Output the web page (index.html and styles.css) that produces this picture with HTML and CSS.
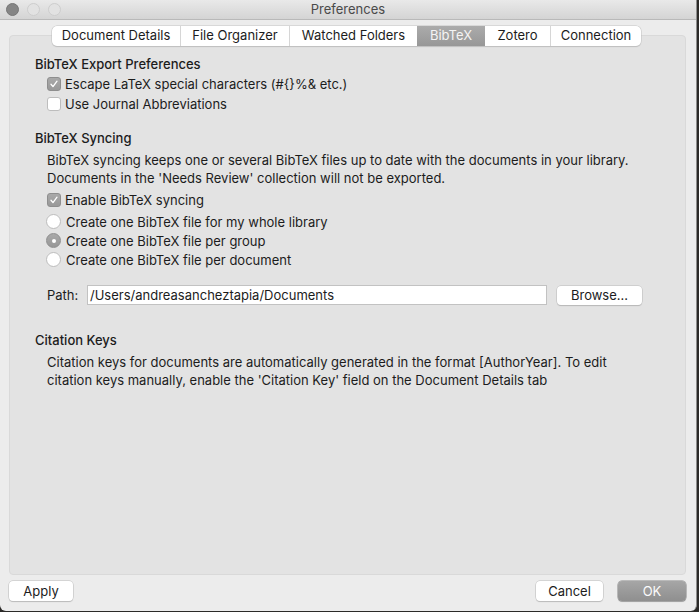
FILE: index.html
```html
<!DOCTYPE html>
<html>
<head>
<meta charset="utf-8">
<link rel="stylesheet" href="styles.css">
</head>
<body>
<div class="window">
  <div class="titlebar">
    <div class="lights">
      <span class="light dark"></span>
      <span class="light"></span>
      <span class="light"></span>
    </div>
    <div class="title">Preferences</div>
  </div>
  <div class="main">
    <div class="tabs">
      <div class="tab t1">Document Details</div>
      <div class="tab t2">File Organizer</div>
      <div class="tab t3">Watched Folders</div>
      <div class="tab t4 sel">BibTeX</div>
      <div class="tab t5">Zotero</div>
      <div class="tab t6">Connection</div>
    </div>
    <div class="panel">
      <div class="heading">BibTeX Export Preferences</div>
      <div class="row"><span class="cb on"><svg viewBox="0 0 14 14" width="14" height="14"><path d="M4 7.3 L6 9.6 L10 4.2" fill="none" stroke="#fff" stroke-width="1.3" stroke-linecap="round" stroke-linejoin="round"/></svg></span><span>Escape LaTeX special characters (#{}%&amp; etc.)</span></div>
      <div class="row"><span class="cb"></span><span>Use Journal Abbreviations</span></div>

      <div class="heading h2">BibTeX Syncing</div>
      <div class="para">BibTeX syncing keeps one or several BibTeX files up to date with the documents in your library.<br>Documents in the 'Needs Review' collection will not be exported.</div>
      <div class="row enable"><span class="cb on"><svg viewBox="0 0 14 14" width="14" height="14"><path d="M4 7.3 L6 9.6 L10 4.2" fill="none" stroke="#fff" stroke-width="1.3" stroke-linecap="round" stroke-linejoin="round"/></svg></span><span>Enable BibTeX syncing</span></div>
      <div class="radios">
        <div class="rrow"><span class="rb"></span><span>Create one BibTeX file for my whole library</span></div>
        <div class="rrow"><span class="rb on"></span><span>Create one BibTeX file per group</span></div>
        <div class="rrow"><span class="rb"></span><span>Create one BibTeX file per document</span></div>
      </div>
      <div class="pathrow">
        <span class="plabel">Path:</span>
        <div class="input">/Users/andreasancheztapia/Documents</div>
        <div class="btn browse">Browse...</div>
      </div>

      <div class="heading h3">Citation Keys</div>
      <div class="para">Citation keys for documents are automatically generated in the format [AuthorYear]. To edit<br>citation keys manually, enable the 'Citation Key' field on the Document Details tab</div>
    </div>
    <div class="footer">
      <div class="btn apply">Apply</div>
      <div class="spacer"></div>
      <div class="btn cancel">Cancel</div>
      <div class="btn ok">OK</div>
    </div>
  </div>
</div>
</body>
</html>
```
FILE: styles.css
```css
html, body {
  margin: 0;
  padding: 0;
}
body {
  background: #2b2a28;
  width: 699px;
  height: 612px;
  overflow: hidden;
  font-family: Inter, "Liberation Sans", sans-serif;
  font-size: 13px;
  color: #1c1c1c;
}
.window {
  width: 696px;
  height: 611px;
  background: #ececec;
  border-right: 1px solid #8d8d8d;
  border-radius: 0 0 6px 6px;
  display: flex;
  flex-direction: column;
  overflow: hidden;
}
.titlebar {
  height: 19px;
  flex: none;
  background: linear-gradient(#e9e9e9, #d4d4d4);
  border-bottom: 1px solid #b9b9b9;
  display: flex;
  align-items: center;
  position: relative;
}
.lights {
  display: flex;
  gap: 8px;
  padding-left: 6px;
}
.light {
  width: 11px;
  height: 11px;
  border-radius: 50%;
  background: #e2e2e2;
  border: 1px solid #cdcdcd;
  box-sizing: content-box;
}
.light.dark {
  background: #858585;
  border-color: #767676;
}
.title {
  position: absolute;
  left: 0;
  right: 0;
  top: 0;
  line-height: 19px;
  text-align: center;
  color: #4a4a4a;
  font-size: 13px;
}
.main {
  flex: 1;
  display: flex;
  flex-direction: column;
  padding: 0 10px 0 9px;
}
.tabs {
  margin-top: 6px;
  margin-left: 43px;
  display: flex;
  height: 20px;
  align-self: flex-start;
  background: #fff;
  border-radius: 5px;
  box-shadow: 0 0 0 0.5px #c4c4c4, 0 1px 1px rgba(0,0,0,0.18);
  position: relative;
  z-index: 2;
  overflow: hidden;
}
.tab {
  height: 20px;
  line-height: 19px;
  text-align: center;
  color: #1c1c1c;
  border-left: 1px solid #d6d6d6;
  box-sizing: border-box;
}
.tab.t1 { width: 128px; border-left: none; }
.tab.t2 { width: 109px; }
.tab.t3 { width: 128px; }
.tab.t4 { width: 68px; }
.tab.t5 { width: 65px; }
.tab.t6 { width: 91px; }
.tab.sel {
  background: linear-gradient(#ababab, #979797);
  color: #f4f4f4;
  border-left: none;
}
.tab.sel + .tab { border-left: none; }
.panel {
  margin-top: -11px;
  height: 540px;
  box-sizing: border-box;
  background: #e3e3e3;
  border: 1px solid #d9d9d9;
  border-radius: 4px;
  padding: 18px 0 0 25px;
  display: flex;
  flex-direction: column;
}
.heading {
  height: 20px;
  line-height: 20px;
  font-weight: 500;
}
.h2 { margin-top: 14px; }
.h3 { margin-top: 25px; }
.row {
  height: 20px;
  display: flex;
  align-items: center;
  padding-left: 12px;
}
.cb {
  width: 14px;
  height: 14px;
  box-sizing: border-box;
  border-radius: 3px;
  background: #fff;
  border: 1px solid #bdbdbd;
  margin-right: 4px;
  display: flex;
}
.cb.on {
  background: linear-gradient(#a9a9a9, #999);
  border-color: #8e8e8e;
}
.cb svg {
  margin: -1px;
}
.para {
  margin-top: 3px;
  padding-left: 12px;
  line-height: 18px;
}
.enable { margin-top: 3px; }
.radios {
  margin-top: 2px;
  display: flex;
  flex-direction: column;
}
.rrow {
  height: 19px;
  display: flex;
  align-items: center;
  padding-left: 11px;
}
.rb {
  width: 15px;
  height: 15px;
  box-sizing: border-box;
  border-radius: 50%;
  background: #fff;
  border: 1px solid #bdbdbd;
  margin-right: 5px;
  position: relative;
}
.rb.on {
  background: linear-gradient(#a9a9a9, #979797);
  border-color: #8e8e8e;
}
.rb.on::after {
  content: "";
  position: absolute;
  left: 4.5px;
  top: 4.5px;
  width: 4px;
  height: 4px;
  border-radius: 50%;
  background: #fff;
}
.pathrow {
  margin-top: 16px;
  height: 20px;
  display: flex;
  align-items: center;
  padding-left: 12px;
}
.plabel {
  width: 40px;
}
.input {
  width: 460px;
  height: 20px;
  box-sizing: border-box;
  background: #fff;
  border: 1px solid #c2c2c2;
  line-height: 18px;
  padding-left: 2px;
}
.btn {
  height: 20px;
  box-sizing: border-box;
  background: #fff;
  border-radius: 4px;
  box-shadow: 0 0 0 0.5px #bcbcbc, 0 1px 1px rgba(0,0,0,0.2);
  text-align: center;
  line-height: 20px;
  color: #1c1c1c;
}
.browse {
  width: 85px;
  margin-left: 10px;
  height: 19px;
  line-height: 19px;
}
.footer {
  margin-top: 6px;
  display: flex;
  height: 20px;
}
.apply { width: 64px; }
.spacer { flex: 1; }
.cancel { width: 67px; margin-right: 15px; }
.ok {
  width: 68px;
  background: linear-gradient(#a6a6a6, #8f8f8f);
  color: #fbfbfb;
  box-shadow: 0 0 0 0.5px #888, 0 1px 1px rgba(0,0,0,0.2);
}
```
